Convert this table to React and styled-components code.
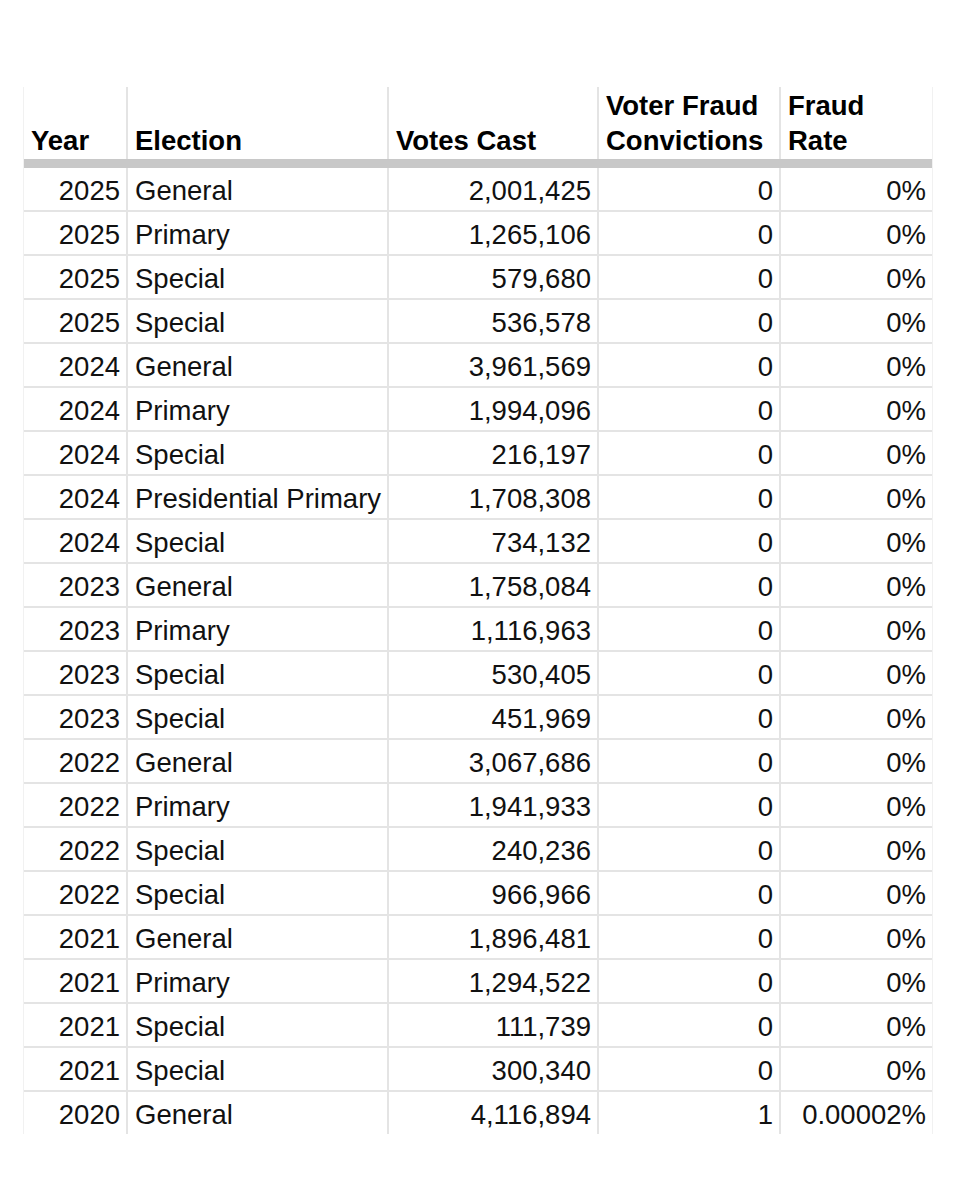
import styled, { createGlobalStyle } from 'styled-components';

const rows = [
  ['2025', 'General', '2,001,425', '0', '0%'],
  ['2025', 'Primary', '1,265,106', '0', '0%'],
  ['2025', 'Special', '579,680', '0', '0%'],
  ['2025', 'Special', '536,578', '0', '0%'],
  ['2024', 'General', '3,961,569', '0', '0%'],
  ['2024', 'Primary', '1,994,096', '0', '0%'],
  ['2024', 'Special', '216,197', '0', '0%'],
  ['2024', 'Presidential Primary', '1,708,308', '0', '0%'],
  ['2024', 'Special', '734,132', '0', '0%'],
  ['2023', 'General', '1,758,084', '0', '0%'],
  ['2023', 'Primary', '1,116,963', '0', '0%'],
  ['2023', 'Special', '530,405', '0', '0%'],
  ['2023', 'Special', '451,969', '0', '0%'],
  ['2022', 'General', '3,067,686', '0', '0%'],
  ['2022', 'Primary', '1,941,933', '0', '0%'],
  ['2022', 'Special', '240,236', '0', '0%'],
  ['2022', 'Special', '966,966', '0', '0%'],
  ['2021', 'General', '1,896,481', '0', '0%'],
  ['2021', 'Primary', '1,294,522', '0', '0%'],
  ['2021', 'Special', '111,739', '0', '0%'],
  ['2021', 'Special', '300,340', '0', '0%'],
  ['2020', 'General', '4,116,894', '1', '0.00002%'],
];

const align = ['right', 'left', 'right', 'right', 'right'];

function App() {
  return (
    <>
      <GlobalStyle />
      <Page>
        <Sheet>
          <HeaderRow>
            <HeadCell>Year</HeadCell>
            <HeadCell>Election</HeadCell>
            <HeadCell>Votes Cast</HeadCell>
            <HeadCell>
              Voter Fraud
              <br />
              Convictions
            </HeadCell>
            <HeadCell $last>
              Fraud
              <br />
              Rate
            </HeadCell>
          </HeaderRow>
          {rows.map((row, i) => (
            <Row key={i} $last={i === rows.length - 1}>
              {row.map((value, j) => (
                <Cell key={j} $align={align[j]} $last={j === row.length - 1}>
                  {value}
                </Cell>
              ))}
            </Row>
          ))}
        </Sheet>
      </Page>
    </>
  );
}

export default App;

const GlobalStyle = createGlobalStyle`
  html, body {
    margin: 0;
    background: #ffffff;
  }
  body {
    font-family: "Liberation Sans", Arial, sans-serif;
    color: #111111;
  }
`;

const Page = styled.div`
  padding: 87px 0 66px 23px;
`;

const Sheet = styled.div`
  width: 910px;
  border-left: 1px solid #f1f1f1;
  border-right: 1px solid #f1f1f1;
  box-sizing: border-box;
`;

const columns = '104px 261px 210px 182px 151px';

const HeaderRow = styled.div`
  display: grid;
  grid-template-columns: ${columns};
  height: 81px;
  border-bottom: 9px solid #c8c8c8;
  box-sizing: border-box;
`;

const HeadCell = styled.div`
  display: flex;
  align-items: flex-end;
  padding: 0 6px 1px 7px;
  font-size: 27.5px;
  font-weight: bold;
  line-height: 35px;
  color: #000000;
  white-space: nowrap;
  border-right: ${(p) => (p.$last ? 'none' : '2px solid #e4e4e4')};
`;

const Row = styled.div`
  display: grid;
  grid-template-columns: ${columns};
  height: ${(p) => (p.$last ? '42px' : '44px')};
  border-bottom: ${(p) => (p.$last ? 'none' : '2px solid #e4e4e4')};
  box-sizing: border-box;
`;

const Cell = styled.div`
  display: flex;
  align-items: center;
  justify-content: ${(p) => (p.$align === 'right' ? 'flex-end' : 'flex-start')};
  padding: 3px 6px 0 7px;
  font-size: 27.5px;
  white-space: nowrap;
  border-right: ${(p) => (p.$last ? 'none' : '2px solid #e4e4e4')};
`;
